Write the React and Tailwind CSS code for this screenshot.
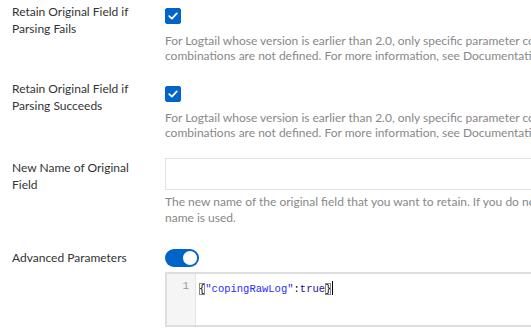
import { useState } from "react"

const font = { fontFamily: '"Segoe UI", Lato, "Noto Sans", sans-serif' }
const mono = { fontFamily: '"Liberation Mono", monospace' }

function Checkbox({ checked, onChange }) {
  return (
    <button
      type="button"
      onClick={() => onChange(!checked)}
      className={`flex h-4 w-4 items-center justify-center rounded-[2px] border ${checked ? "border-[#0064c8] bg-[#0064c8]" : "border-[#c4c6cf] bg-white"}`}
    >
      {checked && (
        <svg width="10" height="8" viewBox="0 0 10 8" fill="none">
          <path d="M1.2 4.1 L3.9 6.6 L8.8 1.4" stroke="white" strokeWidth="1.8" strokeLinecap="round" strokeLinejoin="round" />
        </svg>
      )}
    </button>
  )
}

function Label({ children, className = "" }) {
  return <div className={`w-[165px] shrink-0 pl-3 pr-[18px] text-[12px] leading-[17px] text-[#333] ${className}`}>{children}</div>
}

function Help({ children, className = "" }) {
  return <p className={`whitespace-nowrap text-[12px] leading-[15px] text-[#888] ${className}`}>{children}</p>
}

export default function App() {
  const [keepFail, setKeepFail] = useState(true)
  const [keepOk, setKeepOk] = useState(true)
  const [newName, setNewName] = useState("")
  const [advanced, setAdvanced] = useState(true)

  return (
    <div className="h-[335px] w-[531px] overflow-hidden bg-white pt-[3px]" style={font}>
      <div className="flex items-start">
        <Label>Retain Original Field if Parsing Fails</Label>
        <div className="flex flex-col items-start">
          <div className="mt-[5px]">
            <Checkbox checked={keepFail} onChange={setKeepFail} />
          </div>
          <Help className="mt-[9px]">
            For Logtail whose version is earlier than 2.0, only specific parameter combinations are supported. Other parameter
            <br />
            combinations are not defined. For more information, see Documentation.
          </Help>
        </div>
      </div>

      <div className="mt-[17px] flex items-start">
        <Label>Retain Original Field if Parsing Succeeds</Label>
        <div className="flex flex-col items-start">
          <div className="mt-[6px]">
            <Checkbox checked={keepOk} onChange={setKeepOk} />
          </div>
          <Help className="mt-[8px]">
            For Logtail whose version is earlier than 2.0, only specific parameter combinations are supported. Other parameter
            <br />
            combinations are not defined. For more information, see Documentation.
          </Help>
        </div>
      </div>

      <div className="mt-[18px] flex items-start">
        <Label className="pt-[1px]">New Name of Original Field</Label>
        <div className="flex flex-col">
          <input
            type="text"
            value={newName}
            onChange={(e) => setNewName(e.target.value)}
            className="h-[32px] w-[500px] border border-[#e2e2e2] px-2 text-[12px] text-[#333] outline-none"
          />
          <Help className="mt-[4px] leading-[16px]">
            The new name of the original field that you want to retain. If you do not configure this parameter, the original field
            <br />
            name is used.
          </Help>
        </div>
      </div>

      <div className="mt-[22px] flex items-start">
        <Label className="pt-[1px]">Advanced Parameters</Label>
        <div className="flex flex-col items-start">
          <button
            type="button"
            onClick={() => setAdvanced(!advanced)}
            className={`mt-[1px] flex h-[18px] w-[34px] items-center rounded-full px-[2px] ${advanced ? "justify-end bg-[#0064c8]" : "justify-start bg-[#c4c6cf]"}`}
          >
            <span className="h-[14px] w-[14px] rounded-full bg-white" />
          </button>
          {advanced && (
            <div className="mt-[5px] flex h-[55px] w-[500px] border-2 border-[#dedede]">
              <div className="w-[29px] shrink-0 border-r border-[#e4e4e4] bg-[#f5f5f5] pr-[6px] pt-[4px] text-right text-[11px] leading-[16px] text-[#999]" style={mono}>
                1
              </div>
              <div className="pl-[3px] pt-[4px] text-[10.5px] leading-[16px]" style={mono}>
                <span className="outline outline-1 outline-[#888] -outline-offset-1 text-black">{"{"}</span>
                <span className="text-[#2a2aff]">"copingRawLog"</span>
                <span className="text-black">:</span>
                <span className="text-[#221199]">true</span>
                <span className="outline outline-1 outline-[#888] -outline-offset-1 text-black">{"}"}</span>
                <span className="ml-[1px] inline-block h-[14px] w-px translate-y-[3px] bg-black" />
              </div>
            </div>
          )}
        </div>
      </div>
    </div>
  )
}
